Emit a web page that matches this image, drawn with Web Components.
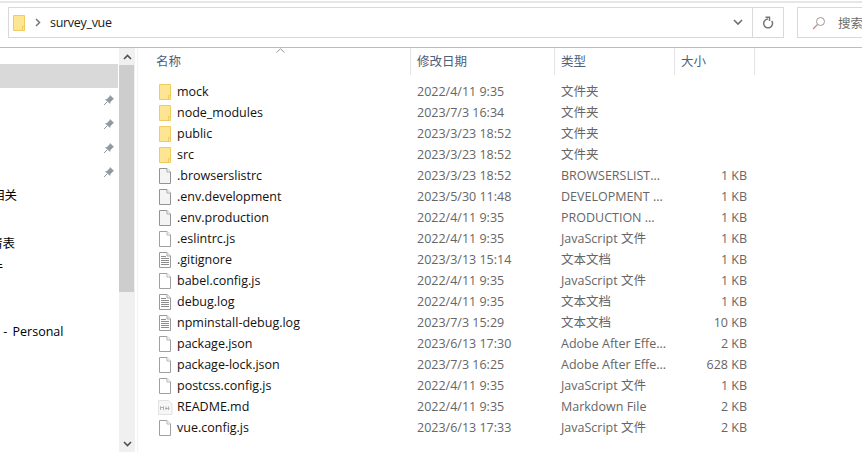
<!DOCTYPE html>
<html>
<head>
<meta charset="utf-8">
<title>survey_vue</title>
<style>
  html, body { margin: 0; height: 100%; background: #fff; overflow: hidden; }
  body { font: 12.5px "Open Sans", "Noto Sans CJK SC", sans-serif; color: #1a1a1a; }
</style>
</head>
<body>
<fe-window>
  <fe-addressbar slot="top" path="survey_vue"></fe-addressbar>
  <fe-sidebar slot="side">
    <fe-navitem selected></fe-navitem>
    <fe-navitem pin></fe-navitem>
    <fe-navitem pin></fe-navitem>
    <fe-navitem pin></fe-navitem>
    <fe-navitem pin></fe-navitem>
    <fe-navitem text="相关" clip="8"></fe-navitem>
    <fe-navitem></fe-navitem>
    <fe-navitem text="情表" clip="10"></fe-navitem>
    <fe-navitem text="文件" clip="22"></fe-navitem>
    <fe-navitem short></fe-navitem>
    <fe-navitem short></fe-navitem>
    <fe-navitem text="OneDrive - Personal" clip="57"></fe-navitem>
  </fe-sidebar>
  <fe-filelist slot="main"></fe-filelist>
</fe-window>

<script>
const FOLDER = `<svg width="16" height="16" viewBox="0 0 16 16"><path d="M1.5.5h11v15h-11z" fill="#fee594" stroke="#f0cb5f"/><path d="M10.500 15.500v-4h2" fill="none" stroke="#f0cb5f"/></svg>`;
const BLANK = `<svg width="16" height="16" viewBox="0 0 16 16"><path d="M1.500.5h7.500l3.500 3.500v11.500h-11z" fill="#f4f4f4" stroke="#939393"/><path d="M9 .5v3.500h3.500" fill="#fff" stroke="#a8a8a8"/></svg>`;
const JS = `<svg width="16" height="16" viewBox="0 0 16 16"><path d="M1.500.5h7.500l3.500 3.500v11.500h-11z" fill="#fff" stroke="#a0a0a0"/><path d="M9 .5v3.500h3.500" fill="#fff" stroke="#b4b4b4"/></svg>`;
const TEXTFILE = `<svg width="16" height="16" viewBox="0 0 16 16"><path d="M1.500.5h7.500l3.500 3.500v11.500h-11z" fill="#fff" stroke="#9a9a9a"/><path d="M9 .5v3.500h3.500" fill="#f4f4f4" stroke="#a8a8a8"/><path d="M3 4.500h5M3 6.500h8M3 8.500h8M3 10.500h8M3 12.500h8" stroke="#8d8d8d"/></svg>`;
const MD = `<svg width="16" height="16" viewBox="0 0 16 16"><path d="M.5 1.500h10l3.500 3.500v10.500h-13.500z" fill="#f6f6f6" stroke="#e2e2e2"/><path d="M2.500 11v-3.500l1.500 1.500 1.500-1.500v3.500M8 7.500v3.500M10.500 7.500v3.500M7 9.500h4.500" stroke="#b0b0b0" fill="none"/></svg>`;

class FeWindow extends HTMLElement {
  constructor() {
    super();
    this.attachShadow({ mode: 'open' }).innerHTML = `
      <style>
        :host { display: grid; grid-template-rows: 48px 1fr; grid-template-columns: 138px 1fr; width: 862px; height: 460px; overflow: hidden; }
        ::slotted([slot=top]) { grid-column: 1 / 3; }
      </style>
      <slot name="top"></slot><slot name="side"></slot><slot name="main"></slot>`;
  }
}

class FeAddressbar extends HTMLElement {
  connectedCallback() {
    this.attachShadow({ mode: 'open' }).innerHTML = `
      <style>
        :host { display: flex; flex-direction: column; box-sizing: border-box; height: 48px; padding-top: 1px; border-bottom: 1px solid #bcbcbc; overflow: hidden; }
        .rule { height: 2px; background: #e6e6e6; flex: none; }
        .bar { display: flex; gap: 13px; padding: 4px 0 0 8px; }
        .box { border: 1px solid #d9d9d9; box-sizing: border-box; height: 31px; display: flex; align-items: center; background: #fff; white-space: nowrap; flex: none; }
        .addr { width: 776px; }
        .path { flex: 1; display: flex; align-items: center; padding-left: 3px; color: #1a1a1a; letter-spacing: -.3px; }
        .chev { margin: 0 9px 0 7px; }
        .cell { width: 31px; height: 100%; flex: none; display: flex; align-items: center; justify-content: center; border-left: 1px solid #d9d9d9; box-sizing: border-box; }
        .drop { margin-right: 9px; }
        .search { width: 200px; padding-left: 14px; color: #6d6d6d; gap: 12px; }
        svg { display: block; flex: none; }
      </style>
      <div class="rule"></div>
      <div class="bar">
        <div class="box addr">
          <div class="path">${FOLDER}
            <svg class="chev" width="6" height="9" viewBox="0 0 6 9"><path d="M1 1l3.500 3.500L1 8" fill="none" stroke="#777" stroke-width="1.500"/></svg>
            <span>${this.getAttribute('path')}</span>
          </div>
          <svg class="drop" width="10" height="7" viewBox="0 0 10 7"><path d="M1 1l4 4 4-4" fill="none" stroke="#6f6f6f" stroke-width="1.600"/></svg>
          <div class="cell"><svg width="12" height="13" viewBox="0 0 12 13"><path d="M6 3A4.400 4.400 0 1 0 9.800 5" fill="none" stroke="#777" stroke-width="1.500"/><path d="M3.500 1.200H7.500V5" fill="none" stroke="#777" stroke-width="1.500"/></svg></div>
        </div>
        <div class="box search">
          <svg width="14" height="14" viewBox="0 0 14 14"><circle cx="8.500" cy="5.500" r="4" fill="none" stroke="#999"/><path d="M5.500 8.500L1 13" stroke="#c8907a" stroke-width="1.200"/></svg>
          <span>搜索</span>
        </div>
      </div>`;
  }
}

class FeNavitem extends HTMLElement {
  connectedCallback() {
    const text = this.getAttribute('text') || '';
    const clip = this.getAttribute('clip') || 0;
    const pin = this.hasAttribute('pin');
    this.attachShadow({ mode: 'open' }).innerHTML = `
      <style>
        :host { display: flex; align-items: center; height: 24px; line-height: 20px; overflow: hidden; white-space: nowrap; color: #000; word-spacing: 2px; }
        :host([selected]) { background: #d9d9d9; }
        :host([short]) { height: 20px; }
        span { margin-left: -${clip}px; padding-bottom: 1px; }
        svg { margin-left: auto; margin-right: 3px; }
      </style>
      <span>${text}</span>
      ${pin ? `<svg width="12" height="12" viewBox="0 0 12 12"><path d="M7 1l4 4-1 .5-2.500 2.500-.3 2L2 5.400l2-.4L6.500 2.500z" fill="#8f9aa2"/><path d="M4 8l-3 3" stroke="#8f9aa2"/></svg>` : ''}`;
  }
}

class FeSidebar extends HTMLElement {
  connectedCallback() {
    this.attachShadow({ mode: 'open' }).innerHTML = `
      <style>
        :host { display: flex; height: 404px; overflow: hidden; }
        .items { width: 118px; flex: none; padding-top: 16px; }
        .track { width: 16px; margin-left: 1px; background: #f0f0f0; display: flex; flex-direction: column; flex: none; }
        .btn { height: 17px; display: flex; align-items: center; justify-content: center; flex: none; }
        .thumb { height: 227px; width: 15px; background: #cdcdcd; flex: none; }
        .rest { flex: 1; }
        .rule { width: 1px; background: #f2f2f2; margin-left: 2px; flex: none; }
      </style>
      <div class="items"><slot></slot></div>
      <div class="track">
        <div class="btn"><svg width="9" height="6" viewBox="0 0 9 6"><path d="M1 5l3.500-3.500L8 5" fill="none" stroke="#505050" stroke-width="1.600"/></svg></div>
        <div class="thumb"></div>
        <div class="rest"></div>
        <div class="btn"><svg width="9" height="6" viewBox="0 0 9 6"><path d="M1 1l3.500 3.500L8 1" fill="none" stroke="#505050" stroke-width="1.600"/></svg></div>
      </div>
      <div class="rule"></div>`;
  }
}

const FILES = [
  ['mock', '2022/4/11 9:35', '文件夹', '', FOLDER],
  ['node_modules', '2023/7/3 16:34', '文件夹', '', FOLDER],
  ['public', '2023/3/23 18:52', '文件夹', '', FOLDER],
  ['src', '2023/3/23 18:52', '文件夹', '', FOLDER],
  ['.browserslistrc', '2023/3/23 18:52', 'BROWSERSLIST...', '1 KB', BLANK],
  ['.env.development', '2023/5/30 11:48', 'DEVELOPMENT ...', '1 KB', BLANK],
  ['.env.production', '2022/4/11 9:35', 'PRODUCTION ...', '1 KB', BLANK],
  ['.eslintrc.js', '2022/4/11 9:35', 'JavaScript 文件', '1 KB', JS],
  ['.gitignore', '2023/3/13 15:14', '文本文档', '1 KB', TEXTFILE],
  ['babel.config.js', '2022/4/11 9:35', 'JavaScript 文件', '1 KB', JS],
  ['debug.log', '2022/4/11 9:35', '文本文档', '1 KB', TEXTFILE],
  ['npminstall-debug.log', '2023/7/3 15:29', '文本文档', '10 KB', TEXTFILE],
  ['package.json', '2023/6/13 17:30', 'Adobe After Effe...', '2 KB', JS],
  ['package-lock.json', '2023/7/3 16:25', 'Adobe After Effe...', '628 KB', JS],
  ['postcss.config.js', '2022/4/11 9:35', 'JavaScript 文件', '1 KB', JS],
  ['README.md', '2022/4/11 9:35', 'Markdown File', '2 KB', MD],
  ['vue.config.js', '2023/6/13 17:33', 'JavaScript 文件', '2 KB', JS],
];

class FeRow extends HTMLElement {
  connectedCallback() {
    const f = FILES[this.getAttribute('index')];
    this.attachShadow({ mode: 'open' }).innerHTML = `
      <style>
        :host { display: grid; grid-template-columns: 273px 144px 120px 80px; height: 21px; line-height: 21px; align-items: center; white-space: nowrap; }
        .name { display: flex; align-items: center; gap: 3px; padding-left: 20px; color: #111; }
        .dim { color: #666; padding-left: 6px; overflow: hidden; }
        .size { text-align: right; padding-right: 8px; }
        svg { display: block; flex: none; }
      </style>
      <div class="name">${f[4]}<span>${f[0]}</span></div>
      <div class="dim">${f[1]}</div>
      <div class="dim">${f[2]}</div>
      <div class="dim size">${f[3]}</div>`;
  }
}

class FeFilelist extends HTMLElement {
  connectedCallback() {
    const heads = ['名称', '修改日期', '类型', '大小'];
    this.attachShadow({ mode: 'open' }).innerHTML = `
      <style>
        :host { display: block; overflow: hidden; position: relative; }
        .head { display: grid; grid-template-columns: 273px 144px 120px 80px; width: 617px; height: 27px; margin-bottom: 6px; }
        .head div { color: #4c607a; padding-left: 18px; line-height: 27px; border-right: 1px solid #e5e5e5; box-sizing: border-box; }
        .head div + div { padding-left: 6px; }
        .sort { position: absolute; left: 138px; top: 0; }
      </style>
      <div class="head">${heads.map(h => `<div>${h}</div>`).join('')}</div>
      <svg class="sort" width="9" height="5" viewBox="0 0 9 5"><path d="M.5 4.500L4.500 .8l4 3.700" fill="none" stroke="#9a9a9a"/></svg>
      ${FILES.map((f, i) => `<fe-row index="${i}"></fe-row>`).join('')}`;
  }
}

customElements.define('fe-window', FeWindow);
customElements.define('fe-addressbar', FeAddressbar);
customElements.define('fe-navitem', FeNavitem);
customElements.define('fe-sidebar', FeSidebar);
customElements.define('fe-row', FeRow);
customElements.define('fe-filelist', FeFilelist);
</script>
</body>
</html>
